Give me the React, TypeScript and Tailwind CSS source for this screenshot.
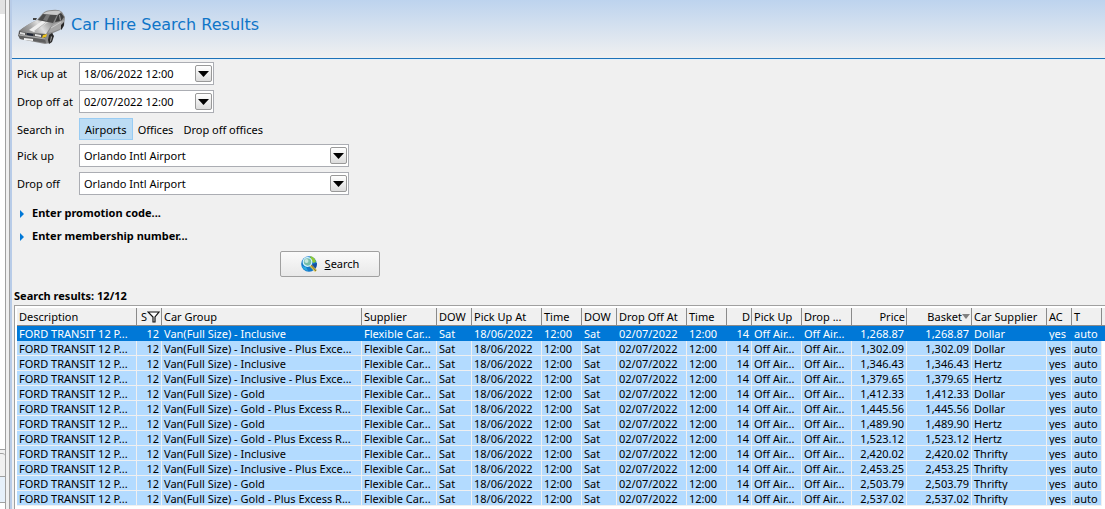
import React from "react";

type Column = {
  label: string;
  width: string;
  align?: "right";
  icon?: "filter" | "sort";
};

const columns: Column[] = [
  { label: "Description", width: "w-[120px]" },
  { label: "S", width: "w-[25px]", align: "right", icon: "filter" },
  { label: "Car Group", width: "w-[200px]" },
  { label: "Supplier", width: "w-[75px]" },
  { label: "DOW", width: "w-[35px]" },
  { label: "Pick Up At", width: "w-[70px]" },
  { label: "Time", width: "w-[40px]" },
  { label: "DOW", width: "w-[35px]" },
  { label: "Drop Off At", width: "w-[70px]" },
  { label: "Time", width: "w-[40px]" },
  { label: "D", width: "w-[25px]", align: "right" },
  { label: "Pick Up", width: "w-[50px]" },
  { label: "Drop ...", width: "w-[50px]" },
  { label: "Price", width: "w-[55px]", align: "right" },
  { label: "Basket", width: "w-[65px]", align: "right", icon: "sort" },
  { label: "Car Supplier", width: "w-[75px]" },
  { label: "AC", width: "w-[25px]" },
  { label: "T", width: "w-[30px]" },
];

const cars = [
  { group: "Inclusive", price: "1,268.87", supplier: "Dollar" },
  { group: "Inclusive - Plus Exce...", price: "1,302.09", supplier: "Dollar" },
  { group: "Inclusive", price: "1,346.43", supplier: "Hertz" },
  { group: "Inclusive - Plus Exce...", price: "1,379.65", supplier: "Hertz" },
  { group: "Gold", price: "1,412.33", supplier: "Dollar" },
  { group: "Gold - Plus Excess R...", price: "1,445.56", supplier: "Dollar" },
  { group: "Gold", price: "1,489.90", supplier: "Hertz" },
  { group: "Gold - Plus Excess R...", price: "1,523.12", supplier: "Hertz" },
  { group: "Inclusive", price: "2,420.02", supplier: "Thrifty" },
  { group: "Inclusive - Plus Exce...", price: "2,453.25", supplier: "Thrifty" },
  { group: "Gold", price: "2,503.79", supplier: "Thrifty" },
  { group: "Gold - Plus Excess R...", price: "2,537.02", supplier: "Thrifty" },
];

const CarIcon = () => (
  <svg className="h-9 w-12 shrink-0" viewBox="0 0 48 36" aria-hidden="true">
    <defs>
      <linearGradient id="hood" x1="0" y1="0.6" x2="1" y2="0.3">
        <stop offset="0" stopColor="#7d7d7d" />
        <stop offset="0.35" stopColor="#a8a8a8" />
        <stop offset="0.6" stopColor="#dedede" />
        <stop offset="1" stopColor="#8f8f8f" />
      </linearGradient>
    </defs>
    {/* body */}
    <path
      d="M1 22Q8 16 19 11L25 4Q28 1 34 1 41 0 44 3L47 8 46 17 42 21 35 24 32 34 27 35 2 30 0 26Z"
      fill="#8a8a8a"
    />
    {/* hood */}
    <path d="M1 22Q8 16 19 11L36 14Q31 19 28 25L9 24Z" fill="url(#hood)" />
    <path d="m11 21 13-9 6 1-14 10Z" fill="#efefef" />
    <path d="m16 22 12-9h1l-11 9Z" fill="#b5b5b5" />
    {/* windscreen, roof and side windows */}
    <path d="m20 11 5-6 14 1-4 8Z" fill="#4b4b4b" />
    <path d="m28 6 4 0-3 6-4-1Z" fill="#777" />
    <path d="M25 5Q28 2 34 2 41 1 43 3L39 6Z" fill="#c9c9c9" />
    <path d="m37 13 3-7 3-2 3 4-3 4Z" fill="#3d3d3d" />
    <path d="m41 6 1 0 1 5-1 1Z" fill="#9a9a9a" />
    <path d="m30 24 5-9 8-3 3-1-1 6-3 3-8 3Z" fill="#a7a7a7" />
    <path d="m33 19 10-6" stroke="#d4d4d4" strokeWidth="0.8" />
    {/* nose */}
    <path d="m1 22 8 2 19 1-1 4-26-4Z" fill="#555" />
    <path d="m2 23 5 1v2l-5-1Z" fill="#dcdcdc" />
    <path d="m9 24 6 1v2l-6-1Z" fill="#1f2635" />
    <path d="m17 25 6 1v2l-6-1Z" fill="#e4e4e4" />
    <path d="m25 26 4-1-1 3-4 1Z" fill="#ecc31a" />
    <path d="m0 26 27 4 1 4-26-4Z" fill="#5f5f5f" />
    <path d="m1 26 26 4" stroke="#b8b8b8" strokeWidth="0.8" />
    <path d="m6 29 9 1v2l-9-1Z" fill="#f3f3f3" />
    {/* wheels and mirror */}
    <path d="m31 26 3-2 2 3-2 6-3 2-1-4Z" fill="#2a2a2a" />
    <path d="m33 27 1 1-1 4-1 1Z" fill="#aaa" />
    <path d="m43 16 3-3v3l-2 4-1 1Z" fill="#262626" />
    <path d="m15 9 4 0-1 2-3 0Z" fill="#444" />
  </svg>
);

const SearchGlobeIcon = () => (
  <svg className="size-4 shrink-0" viewBox="0 0 16 16" aria-hidden="true">
    <circle cx="8" cy="8" r="7.8" fill="#1479ca" />
    <path d="M9 0q5 1 6 6l-3 1-2-4Z" fill="#90ca34" />
    <path d="m1 10 4 1 2 4Q2 14 1 10Z" fill="#29a9df" />
    <path d="m12 8 4-1q0 5-3 7l-3-3Z" fill="#1550a0" />
    <path d="m9 9 6 6" stroke="#d7c34a" strokeWidth="2.5" />
    <path d="m10 9 5 6" stroke="#795b29" strokeWidth="0.8" />
    <circle cx="6.5" cy="6" r="4.3" fill="#75bda9" stroke="#d4f5ff" strokeWidth="1.2" />
    <circle cx="5.5" cy="5" r="2" fill="#c6e7dc" />
  </svg>
);

const FilterIcon = () => (
  <svg className="h-3 w-[13px] shrink-0" viewBox="0 0 13 12" aria-hidden="true">
    <path d="M1 1h11L8 6v5H6V6Z" fill="#fff" stroke="#111" strokeWidth="1.2" />
  </svg>
);

const DropButton = () => (
  <span className="pointer-events-none col-start-1 row-start-1 mr-[2px] flex h-[17px] w-[17px] items-center justify-center self-center justify-self-end rounded-[2px] border border-[#999] bg-gradient-to-b from-white to-[#dcdcdc]">
    <svg className="h-[6px] w-[11px]" viewBox="0 0 11 6" aria-hidden="true">
      <path d="M0 0h11L5.5 6Z" fill="#000" />
    </svg>
  </span>
);

const SelectField = ({ id, label, value, width }: { id: string; label: string; value: string; width: string }) => (
  <div className="flex h-[28px] items-start">
    <label htmlFor={id} className="w-[62px] shrink-0 whitespace-nowrap leading-[23px]">
      {label}
    </label>
    <div className={`grid ${width}`}>
      <select
        id={id}
        className="col-start-1 row-start-1 h-[23px] w-full appearance-none border border-[#abadb3] bg-white pl-1 pr-6 pt-[2px] outline-none"
      >
        <option>{value}</option>
      </select>
      <DropButton />
    </div>
  </div>
);

const Disclosure = ({ label }: { label: string }) => (
  <button className="flex h-[23px] items-center gap-2 pl-[3px] font-bold">
    <svg className="h-[8px] w-[4px]" viewBox="0 0 4 8" aria-hidden="true">
      <path d="M0 0 4 4 0 8Z" fill="#0078d7" />
    </svg>
    {label}
  </button>
);

const ResultsTable = () => (
  <table className="w-full table-fixed border-separate border-spacing-0">
    <thead>
      <tr className="h-[18px] bg-[#f0f0f0]">
        {columns.map((column, i) => (
          <th
            key={i}
            className={`${column.width} h-[18px] overflow-hidden whitespace-nowrap border-b border-r border-[#8a8a8a] p-0 pl-[2px] font-normal leading-[17px] ${
              column.align === "right" ? "pr-[1px] text-right" : "text-left"
            }`}
          >
            {column.icon ? (
              <span className="flex items-center justify-end">
                {column.label}
                {column.icon === "filter" && <FilterIcon />}
                {column.icon === "sort" && (
                  <svg className="h-[5px] w-[8px]" viewBox="0 0 8 5" aria-hidden="true">
                    <path d="M0 0h8L4 5Z" fill="#808080" />
                  </svg>
                )}
              </span>
            ) : (
              column.label
            )}
          </th>
        ))}
        <th className="border-b border-[#8a8a8a] p-0" />
      </tr>
    </thead>
    <tbody>
      {cars.map((car, row) => {
        const cells = [
          "FORD TRANSIT 12 P...",
          "12",
          `Van(Full Size) - ${car.group}`,
          "Flexible Car...",
          "Sat",
          "18/06/2022",
          "12:00",
          "Sat",
          "02/07/2022",
          "12:00",
          "14",
          "Off Air...",
          "Off Air...",
          car.price,
          car.price,
          car.supplier,
          "yes",
          "auto",
        ];
        return (
          <tr key={row} className={row === 0 ? "bg-[#0078d7] text-white" : ""}>
            {cells.map((cell, i) => (
              <td
                key={i}
                className={`h-[15px] overflow-hidden whitespace-nowrap border-b border-r p-0 pl-[2px] pt-[2px] leading-[12px] ${
                  row === 0 ? "border-[#0078d7]" : "border-[#f0f0f0] bg-[#b3dbff]"
                } ${columns[i].align === "right" ? "pr-[2px] text-right" : ""}`}
              >
                {cell}
              </td>
            ))}
            <td className="p-0" />
          </tr>
        );
      })}
    </tbody>
  </table>
);

const App = () => {
  return (
    <div className="flex min-h-screen bg-[#f0f0f0] font-['Noto_Sans','Open_Sans',sans-serif] text-[11px] text-black">
      <aside className="flex w-[12px] shrink-0 border-r-2 border-[#b8cce8]">
        <div className="flex w-[6px] flex-col border-r border-[#a0a0a0]">
          <div className="h-[14px] bg-[#e2e2e2]" />
          <div className="grow border-b border-[#a0a0a0] bg-white" />
          <div className="h-[3px]" />
          <div className="h-[24px] rounded-tr-[3px] border-y border-[#a0a0a0]" />
          <div className="h-[26px] border-b border-[#a0a0a0] bg-[#e6f0fa]" />
          <div className="h-[6px] bg-white" />
        </div>
        <div className="grow border-r border-[#a0a0a0]" />
      </aside>

      <div className="flex min-w-0 grow flex-col">
        <header className="flex h-[59px] items-start gap-[5px] border-b border-[#1d72b8] bg-gradient-to-b from-[#bdd3ee] to-[#f0f0f0] pl-[6px] pt-[9px]">
          <CarIcon />
          <h1 className="font-['DejaVu_Sans',sans-serif] text-[16px] leading-[32px] text-[#0f75c8]">
            Car Hire Search Results
          </h1>
        </header>

        <form
          className="flex flex-col border-t border-[#e3f1fc] px-[5px] pt-[2px]"
          onSubmit={(e) => e.preventDefault()}
        >
          <SelectField id="pickup-at" label="Pick up at" value="18/06/2022 12:00" width="w-[135px]" />
          <SelectField id="dropoff-at" label="Drop off at" value="02/07/2022 12:00" width="w-[135px]" />
          <div className="flex h-[26px] items-start">
            <span className="w-[62px] shrink-0 leading-[23px]">Search in</span>
            <div className="flex h-[22px]">
              <button type="button" className="border border-[#99ccf3] bg-[#bcdcf4] px-[5px] pt-[2px]">
                Airports
              </button>
              <button type="button" className="px-[5px] pt-[2px]">
                Offices
              </button>
              <button type="button" className="px-[5px] pt-[2px]">
                Drop off offices
              </button>
            </div>
          </div>
          <SelectField id="pickup" label="Pick up" value="Orlando Intl Airport" width="w-[270px]" />
          <SelectField id="dropoff" label="Drop off" value="Orlando Intl Airport" width="w-[270px]" />
          <div className="flex flex-col items-start pt-[2px]">
            <Disclosure label="Enter promotion code..." />
            <Disclosure label="Enter membership number..." />
          </div>
          <button className="ml-[263px] mt-[3px] flex h-[26px] w-[100px] items-center justify-center gap-2 rounded-[2px] border border-[#a0a0a0] bg-gradient-to-b from-[#fafafa] to-[#e8e8e8]">
            <SearchGlobeIcon />
            <span>
              <u>S</u>earch
            </span>
          </button>
        </form>

        <section className="flex grow flex-col pl-[2px] pt-[9px]">
          <h2 className="h-[19px] font-bold leading-[19px]">Search results: 12/12</h2>
          <div className="grow overflow-hidden border-l border-t border-[#a0a0a0] bg-white pl-[2px] pt-[2px]">
            <ResultsTable />
          </div>
        </section>
      </div>
    </div>
  );
};

export default App;
